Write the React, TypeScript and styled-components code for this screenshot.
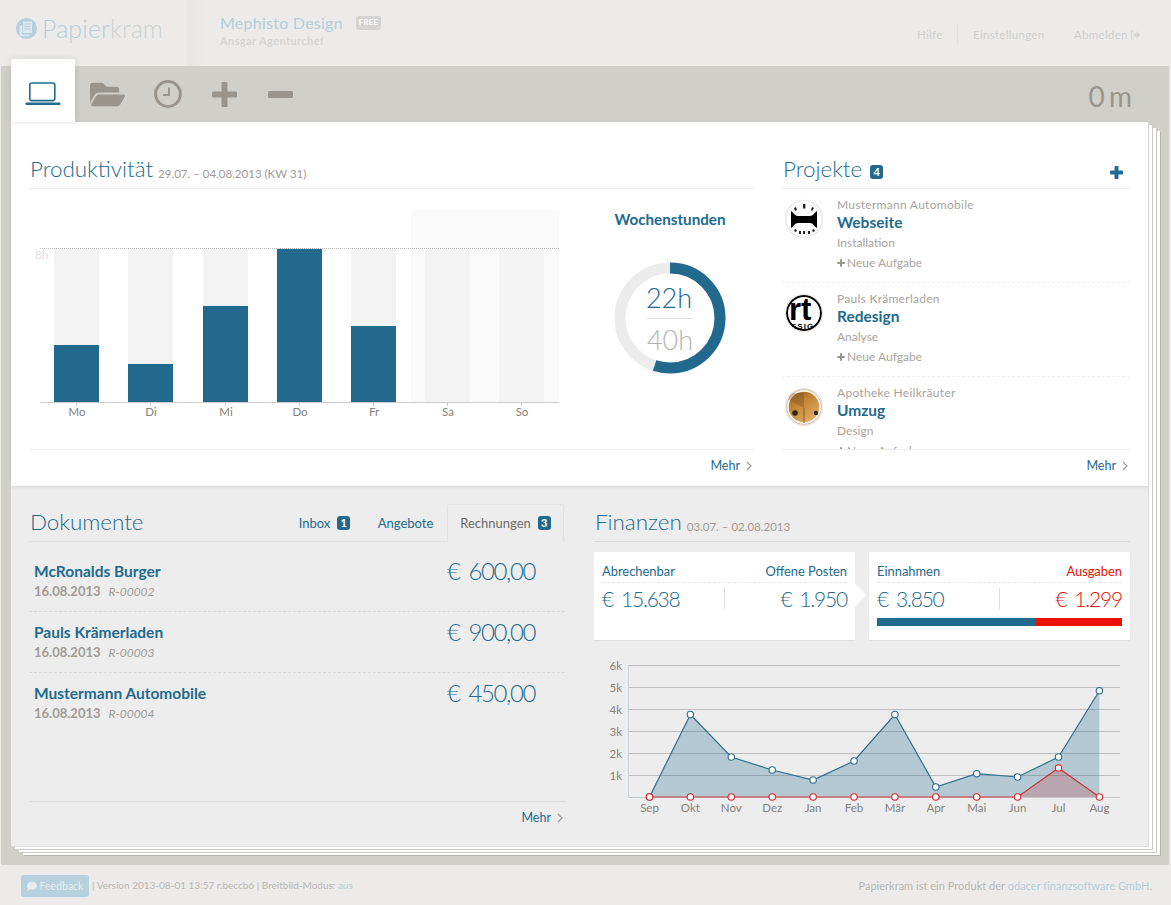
import styled, { createGlobalStyle } from "styled-components";
import { FaFolderOpen, FaComment } from "react-icons/fa";

const BLUE = "#216a8e";

const GlobalStyle = createGlobalStyle`
    html, body {
        margin: 0;
        padding: 0;
        background: #ecebe9;
    }
    body {
        font-family: "Lato", "Open Sans", sans-serif;
        color: #a09b94;
    }
    * { box-sizing: border-box; }
`;

const Page = styled.div`
    width: 1171px;
    height: 905px;
    overflow: hidden;
    display: flex;
    flex-direction: column;
`;

/* ---------- header ---------- */
const Header = styled.header`
    height: 66px;
    display: flex;
    align-items: stretch;
    background: #ecebe9;
`;
const Brand = styled.div`
    width: 187px;
    padding: 0 0 10px 16px;
    display: flex;
    align-items: center;
    gap: 5px;
`;
const BrandName = styled.div`
    font-size: 25px;
    font-weight: 300;
    color: #b5cedb;
    letter-spacing: 0.1px;
    span { color: #cdd2d2; }
`;
const HeaderGrain = styled.div`
    width: 20px;
    background: linear-gradient(90deg, #e8e7e5, #ecebe9);
`;
const Account = styled.div`
    padding: 13px 0 0 13px;
`;
const AccountRow = styled.div`
    display: flex;
    align-items: center;
    gap: 13px;
`;
const AccountName = styled.div`
    font-size: 16px;
    line-height: 20px;
    color: #b5cedb;
    letter-spacing: 0.25px;
`;
const FreeBadge = styled.span`
    background: #d5d4d0;
    color: #fff;
    font-size: 7.5px;
    font-weight: 700;
    letter-spacing: 0.4px;
    padding: 2px 3px;
    border-radius: 3px;
    line-height: 10px;
`;
const AccountUser = styled.div`
    font-size: 11px;
    font-weight: 700;
    line-height: 16px;
    color: #d6d6d4;
    letter-spacing: 0.4px;
`;
const TopNav = styled.nav`
    margin-left: auto;
    padding: 25px 30px 0 0;
    display: flex;
    align-items: flex-start;
    font-size: 11.5px;
    color: #cfcfcd;
    letter-spacing: 0.3px;
`;
const TopNavItem = styled.a<{ $divider?: boolean; $width: number }>`
    width: ${(p) => p.$width}px;
    height: 20px;
    line-height: 18px;
    display: flex;
    align-items: center;
    gap: 2px;
    border-right: ${(p) => (p.$divider ? "1px solid #e3e2e0" : "0")};
`;

/* ---------- band with toolbar + paper stack ---------- */
const Band = styled.main`
    height: 799px;
    margin: 0 2px 0 1px;
    background: #d0cfca;
    display: flex;
    flex-direction: column;
`;
const Toolbar = styled.div`
    height: 56px;
    padding-left: 10px;
    display: flex;
    align-items: flex-start;
`;
const ActiveTab = styled.div`
    width: 64px;
    height: 63px;
    margin-top: -7px;
    background: #fff;
    border-radius: 2px 2px 0 0;
    box-shadow: 0 0 6px rgba(0, 0, 0, 0.12);
    display: flex;
    align-items: center;
    justify-content: center;
    padding-top: 7px;
    position: relative;
    z-index: 2;
`;
const ToolButton = styled.div<{ $width: number }>`
    width: ${(p) => p.$width}px;
    height: 56px;
    display: flex;
    align-items: center;
    justify-content: center;
    color: #9a958c;
`;
const Timer = styled.div`
    margin-left: auto;
    margin-right: 37px;
    font-size: 28px;
    line-height: 60px;
    color: #9a958c;
    word-spacing: -3px;
`;
const Paper = styled.div`
    width: 1137px;
    height: 724px;
    margin-left: 10px;
    background: #ededed;
    box-shadow: 1px 1px 0 #dcdcda, 4px 3px 0 #fff, 5px 4px 0 #c9c9c5, 8px 6px 0 #fff, 9px 7px 0 #c9c9c5,
        12px 9px 0 #fff, 13px 10px 0 #b5b5b0;
    display: flex;
    flex-direction: column;
`;
const TopSheet = styled.section`
    height: 364px;
    padding: 30px 18px 0;
    background: #fff;
    display: grid;
    grid-template-columns: 725px 348px;
    column-gap: 28px;
    box-shadow: 0 1px 3px rgba(0, 0, 0, 0.1);
    position: relative;
`;
const BottomSheet = styled.section`
    flex: 1;
    padding: 19px 18px 13px;
    display: grid;
    grid-template-columns: 536px 536px;
    column-gap: 29px;
`;
const Column = styled.div`
    display: flex;
    flex-direction: column;
    min-width: 0;
`;
const HeadRow = styled.div<{ $line: string }>`
    height: 37px;
    flex: none;
    display: flex;
    align-items: flex-end;
    padding-bottom: 4px;
    border-bottom: 1px solid ${(p) => p.$line};
`;
const Title = styled.h2`
    margin: 0 5px 0 1px;
    font-size: 22.4px;
    line-height: 30px;
    font-weight: 300;
    color: ${BLUE};
`;
const TitleNote = styled.span`
    font-size: 11.5px;
    line-height: 20px;
    color: #a09b94;
`;
const Badge = styled.span`
    display: inline-block;
    min-width: 13px;
    height: 14px;
    border-radius: 3px;
    background: ${BLUE};
    color: #fff;
    font-size: 11px;
    font-weight: 700;
    line-height: 14px;
    text-align: center;
`;
const HeadBadge = styled(Badge)`
    margin: 0 0 5px 3px;
`;
const AddButton = styled.div`
    margin: 0 7px 5px auto;
    display: flex;
`;
const MoreRow = styled.div<{ $line: string; $height: number; $lift?: number }>`
    flex: none;
    height: ${(p) => p.$height}px;
    border-top: 1px solid ${(p) => p.$line};
    display: flex;
    align-items: center;
    justify-content: flex-end;
    gap: 6px;
    padding: 0 2px ${(p) => p.$lift ?? 0}px 0;
    font-size: 12.5px;
    color: ${BLUE};
`;

/* ---------- productivity ---------- */
const ProductivityBody = styled.div`
    height: 260px;
    display: flex;
`;
const HoursBox = styled.div`
    width: 165px;
    padding: 20px 3px 0 0;
    display: flex;
    flex-direction: column;
    align-items: center;
`;
const HoursTitle = styled.div`
    font-size: 15.2px;
    line-height: 20px;
    font-weight: 700;
    color: ${BLUE};
    margin-bottom: 33px;
`;

/* ---------- projects ---------- */
const ProjectList = styled.div`
    height: 260px;
    overflow: hidden;
`;
const ProjectRow = styled.div`
    height: 94px;
    padding: 8px 0 0 4px;
    display: flex;
    gap: 15px;
    border-bottom: 1px dashed #f0f0f0;
`;
const Avatar = styled.div`
    flex: none;
    width: 36px;
    height: 36px;
    margin-top: 4px;
    border-radius: 50%;
    overflow: hidden;
    background: #fff;
    box-shadow: 0 0 2px rgba(0, 0, 0, 0.35);
    svg { display: block; }
`;
const ProjectClient = styled.div`
    font-size: 12px;
    line-height: 15px;
    color: #a8a39c;
    letter-spacing: 0.28px;
`;
const ProjectName = styled.div`
    font-size: 15.5px;
    line-height: 20px;
    font-weight: 700;
    color: ${BLUE};
`;
const ProjectStage = styled.div`
    font-size: 12px;
    line-height: 21px;
    color: #a8a39c;
`;
const NewTask = styled.div`
    font-size: 12px;
    line-height: 20px;
    color: #a8a39c;
    display: flex;
    align-items: center;
    gap: 2px;
`;

/* ---------- documents ---------- */
const Tabs = styled.div`
    margin-left: auto;
    margin-right: 1px;
    align-self: flex-end;
    margin-bottom: -5px;
    display: flex;
    align-items: flex-end;
`;
const DocTab = styled.div<{ $active?: boolean; $width: number }>`
    width: ${(p) => p.$width}px;
    height: 38px;
    display: flex;
    align-items: center;
    justify-content: center;
    gap: 7px;
    font-size: 13px;
    color: ${(p) => (p.$active ? "#6b6b68" : BLUE)};
    border: 1px solid ${(p) => (p.$active ? "#e3e3e3" : "transparent")};
    border-bottom: 1px solid ${(p) => (p.$active ? "#ededed" : "transparent")};
    border-radius: 3px 3px 0 0;
`;
const DocList = styled.div`
    flex: 1;
    padding-top: 9px;
`;
const DocRow = styled.div<{ $last?: boolean }>`
    height: 61px;
    padding: 9px 30px 0 5px;
    display: flex;
    justify-content: space-between;
    border-bottom: ${(p) => (p.$last ? "0" : "1px dashed #d8d8d8")};
`;
const DocName = styled.div`
    font-size: 15.5px;
    line-height: 22px;
    font-weight: 700;
    color: ${BLUE};
`;
const DocMeta = styled.div`
    font-size: 13px;
    line-height: 19px;
    font-weight: 700;
    color: #a09b94;
    em {
        margin-left: 8px;
        font-size: 12px;
        font-weight: 400;
    }
`;
const DocAmount = styled.div`
    font-size: 24px;
    line-height: 22px;
    font-weight: 300;
    letter-spacing: -1.4px;
    word-spacing: 4px;
    color: ${BLUE};
`;

/* ---------- finances ---------- */
const CardRow = styled.div`
    margin-top: 10px;
    display: grid;
    grid-template-columns: 261px 261px;
    column-gap: 14px;
`;
const Card = styled.div<{ $arrow?: boolean }>`
    height: 88px;
    padding: 8px 8px 0;
    background: #fff;
    box-shadow: 0 1px 1px #dfdfdf;
    position: relative;
    ${(p) =>
        p.$arrow &&
        `&::after {
            content: "";
            position: absolute;
            right: -11px;
            top: 31px;
            border-left: 11px solid #fff;
            border-top: 12.5px solid transparent;
            border-bottom: 12.5px solid transparent;
        }`}
`;
const CardLabels = styled.div`
    height: 23px;
    display: flex;
    justify-content: space-between;
    align-items: center;
    border-bottom: 1px dashed #e8e8e8;
    font-size: 12.9px;
    color: ${BLUE};
`;
const RedLabel = styled.span`
    color: #ea1100;
`;
const CardValues = styled.div`
    margin-top: 5px;
    display: grid;
    grid-template-columns: 1fr 1fr;
`;
const CardValue = styled.div<{ $right?: boolean; $red?: boolean }>`
    height: 21px;
    line-height: 21px;
    font-size: 21px;
    font-weight: 300;
    letter-spacing: -1.2px;
    word-spacing: 3.5px;
    white-space: nowrap;
    color: ${(p) => (p.$red ? "#ea1100" : BLUE)};
    text-align: ${(p) => (p.$right ? "right" : "left")};
    border-right: ${(p) => (p.$right ? "0" : "1px solid #dcdcdc")};
`;
const RatioBar = styled.div`
    margin-top: 9px;
    height: 8px;
    display: flex;
`;
const RatioPart = styled.div<{ $size: number; $color: string }>`
    flex: ${(p) => p.$size};
    background: ${(p) => p.$color};
`;
const FinanceChart = styled.div`
    margin-top: 15px;
    flex: none;
    svg { display: block; }
`;

/* ---------- footer ---------- */
const Footer = styled.footer`
    height: 40px;
    padding: 0 19px 0 21px;
    display: flex;
    align-items: center;
    color: #b8b7b3;
    white-space: pre;
`;
const FeedbackButton = styled.div`
    width: 68px;
    height: 22px;
    margin: 2px 3px 0 0;
    background: #b6d0dd;
    border-radius: 3px;
    display: flex;
    align-items: center;
    justify-content: center;
    gap: 3px;
    color: #e6eef1;
    font-size: 10.5px;
`;
const FooterMeta = styled.div`
    font-size: 10px;
    letter-spacing: 0;
`;
const FooterLink = styled.span`
    color: #b5cedb;
`;
const FooterRight = styled.div`
    margin-left: auto;
    font-size: 11px;
    letter-spacing: 0.02px;
`;

/* ---------- drawings ---------- */
const LogoMark = () => (
    <svg width="21" height="21" viewBox="0 0 21 21">
        <circle cx="10.5" cy="10.5" r="10.5" fill="#b5cedb" />
        <path d="M7 3.5h9v11.5h-9z" fill="#dfe8ec" />
        <path d="M8.5 6h6M8.5 8.5h6M8.5 11h6" stroke="#b5cedb" strokeWidth="1.2" />
        <path d="M3.5 7.5h2.5v9h7.5v1.5h-10z" fill="#dfe8ec" />
    </svg>
);

const LaptopIcon = () => (
    <svg width="36" height="24" viewBox="0 0 36 24">
        <rect x="4.8" y="1" width="25" height="17.6" rx="2" fill="none" stroke={BLUE} strokeWidth="1.6" />
        <rect x="0.5" y="20.5" width="35" height="2.6" rx="1" fill={BLUE} />
    </svg>
);

const ClockIcon = () => (
    <svg width="28" height="28" viewBox="0 0 28 28">
        <circle cx="14" cy="14" r="12.4" fill="none" stroke="#9a958c" strokeWidth="3" />
        <path d="M15 7.5v7.5h-6" fill="none" stroke="#9a958c" strokeWidth="2" />
    </svg>
);

const PlusIcon = ({ size, thick, color }: { size: number; thick: number; color: string }) => (
    <svg width={size} height={size} viewBox={`0 0 ${size} ${size}`}>
        <rect x={(size - thick) / 2} y="0" width={thick} height={size} rx="1" fill={color} />
        <rect x="0" y={(size - thick) / 2} width={size} height={thick} rx="1" fill={color} />
    </svg>
);

const MinusIcon = () => (
    <svg width="25" height="7" viewBox="0 0 25 7">
        <rect width="25" height="7" rx="1.5" fill="#9a958c" />
    </svg>
);

const LogoutIcon = () => (
    <svg width="11" height="10" viewBox="0 0 11 10">
        <path d="M4 1H1.5v8H4" fill="none" stroke="#d6d6d4" strokeWidth="1.2" />
        <path d="M3.5 3.5h3V1l4 4-4 4V6.5h-3z" fill="#d6d6d4" />
    </svg>
);

const Chevron = () => (
    <svg width="6" height="10" viewBox="0 0 6 10">
        <path d="M1 1l4 4-4 4" fill="none" stroke="#a09b94" strokeWidth="1.2" />
    </svg>
);

const AvatarMustermann = () => (
    <svg width="36" height="36" viewBox="0 0 36 36">
        <path d="M5 10C8 12 9 15 12 15H24C27 15 28 12 31 10V27C28 25 27 22 24 22H12C9 22 8 25 5 27Z" fill="#000" />
        <path d="M17 3h2.4v4.5h-2.4zM8 7l2-1 1 3-2 1zM26 6l2 1-2 3-1-1zM8 29l2-1 1 2-2 1zM13 30h2v3h-2zM17 30h2v3h-2zM22 30h2v3h-2zM27 28l2 1-1 2-2-1z" fill="#222" />
    </svg>
);

const AvatarPauls = () => (
    <svg width="36" height="36" viewBox="0 0 36 36">
        <circle cx="18" cy="18" r="17" fill="none" stroke="#000" strokeWidth="2" />
        <text x="3" y="25" fontFamily="'Liberation Sans', sans-serif" fontWeight="700" fontSize="31" fill="#000">
            rt
        </text>
        <text x="5" y="34" fontFamily="'Liberation Sans', sans-serif" fontWeight="700" fontSize="8" letterSpacing="1" fill="#000">
            ESIG
        </text>
    </svg>
);

const AvatarApotheke = () => (
    <svg width="36" height="36" viewBox="0 0 36 36">
        <defs>
            <linearGradient id="box" x1="0" y1="0" x2="0.6" y2="1">
                <stop offset="0" stopColor="#9a601c" />
                <stop offset="0.55" stopColor="#c98b3d" />
                <stop offset="1" stopColor="#dcab62" />
            </linearGradient>
        </defs>
        <circle cx="18" cy="18" r="17.3" fill="none" stroke="#c9a27a" strokeWidth="0.8" />
        <circle cx="18" cy="18" r="15.3" fill="url(#box)" />
        <path d="M18 19L3 11V4h15z" fill="#7d5019" opacity="0.35" />
        <path d="M18 19v15" stroke="#8b5a1e" strokeWidth="1" />
        <circle cx="9" cy="24" r="2.8" fill="#33240f" />
        <circle cx="30" cy="24" r="2.2" fill="#33240f" />
    </svg>
);

const WEEK = [
    { day: "Mo", x: 25, top: 156 },
    { day: "Di", x: 99, top: 175 },
    { day: "Mi", x: 174, top: 117 },
    { day: "Do", x: 248, top: 60 },
    { day: "Fr", x: 322, top: 137 },
    { day: "Sa", x: 396, top: 213 },
    { day: "So", x: 470, top: 213 },
];

const WeekChart = () => (
    <svg width="560" height="260" viewBox="0 0 560 260">
        <rect x="382" y="21" width="148" height="192" fill="#fafafa" />
        {WEEK.map((d) => (
            <g key={d.day}>
                <rect x={d.x} y="59" width="45" height="154" fill="#f3f3f3" />
                <rect x={d.x} y={d.top} width="45" height={213 - d.top} fill={BLUE} />
                <line x1={d.x + 22.5} x2={d.x + 22.5} y1="213" y2="217" stroke="#ccc" />
                <text x={d.x + 23} y="227" textAnchor="middle" fontSize="11.5" fill="#85817b">
                    {d.day}
                </text>
            </g>
        ))}
        <line x1="11" x2="530" y1="59.5" y2="59.5" stroke="#bbb" strokeDasharray="1 1" />
        <line x1="11" x2="530" y1="213.5" y2="213.5" stroke="#ccc" />
        <text x="6" y="70" fontSize="11.5" fill="#ddd">
            8h
        </text>
    </svg>
);

const HoursDonut = () => (
    <svg width="112" height="112" viewBox="0 0 112 112">
        <circle cx="56" cy="56" r="50" fill="none" stroke="#ececec" strokeWidth="11" />
        <circle
            cx="56"
            cy="56"
            r="50"
            fill="none"
            stroke={BLUE}
            strokeWidth="11"
            pathLength={100}
            strokeDasharray="55 45"
            transform="rotate(-90 56 56)"
        />
        <text x="55" y="46" textAnchor="middle" fontSize="27" fontWeight="300" fill={BLUE}>
            22h
        </text>
        <line x1="33" x2="79" y1="56.5" y2="56.5" stroke="#ddd" />
        <text x="56" y="88" textAnchor="middle" fontSize="27" fontWeight="300" fill="#b8b4ad">
            40h
        </text>
    </svg>
);

const MONTHS = ["Sep", "Okt", "Nov", "Dez", "Jan", "Feb", "Mär", "Apr", "Mai", "Jun", "Jul", "Aug"];
const INCOME = [142, 59.5, 102, 115, 125, 106, 59.5, 132, 118.7, 122, 102, 35.7];
const SPENDING = [142, 142, 142, 142, 142, 142, 142, 142, 142, 142, 113, 142];
const monthX = (i: number) => 55.5 + i * 40.9;
const toLine = (values: number[]) => values.map((y, i) => `${monthX(i)},${y}`).join(" ");
const toArea = (values: number[]) => `${monthX(0)},142 ${toLine(values)} ${monthX(11)},142`;

const MoneyChart = () => (
    <svg width="536" height="175" viewBox="0 0 536 175">
        {[10, 32, 54, 76, 98, 120].map((y, i) => (
            <g key={y}>
                <line x1="34.5" x2="526" y1={y + 0.5} y2={y + 0.5} stroke="#bdbdbd" />
                <text x="28" y={y + 5} textAnchor="end" fontSize="11.5" fill="#85817b">
                    {6 - i}k
                </text>
            </g>
        ))}
        <line x1="34.5" x2="34.5" y1="10" y2="142" stroke="#c5d3da" />
        <line x1="34.5" x2="526" y1="142.5" y2="142.5" stroke="#c8c8c8" />
        <polygon points={toArea(INCOME)} fill={BLUE} fillOpacity="0.28" />
        <polygon points={toArea(SPENDING)} fill="#c8232c" fillOpacity="0.22" />
        <polyline points={toLine(INCOME)} fill="none" stroke="#2f6f8d" strokeWidth="1.2" />
        <polyline points={toLine(SPENDING)} fill="none" stroke="#c9343a" strokeWidth="1.2" />
        {INCOME.map((y, i) => (
            <circle key={i} cx={monthX(i)} cy={y} r="3.2" fill="#fff" stroke="#2f6f8d" strokeWidth="1.1" />
        ))}
        {SPENDING.map((y, i) => (
            <circle key={i} cx={monthX(i)} cy={y} r="3.2" fill="#fff" stroke="#d9262b" strokeWidth="1.1" />
        ))}
        {MONTHS.map((m, i) => (
            <text key={m} x={monthX(i)} y="157" textAnchor="middle" fontSize="11.5" fill="#85817b">
                {m}
            </text>
        ))}
    </svg>
);

const PROJECTS = [
    { client: "Mustermann Automobile", name: "Webseite", stage: "Installation", logo: <AvatarMustermann /> },
    { client: "Pauls Krämerladen", name: "Redesign", stage: "Analyse", logo: <AvatarPauls /> },
    { client: "Apotheke Heilkräuter", name: "Umzug", stage: "Design", logo: <AvatarApotheke /> },
];

const DOCUMENTS = [
    { name: "McRonalds Burger", number: "R-00002", amount: "€ 600,00" },
    { name: "Pauls Krämerladen", number: "R-00003", amount: "€ 900,00" },
    { name: "Mustermann Automobile", number: "R-00004", amount: "€ 450,00" },
];

export default function App() {
    return (
        <Page>
            <GlobalStyle />
            <Header>
                <Brand>
                    <LogoMark />
                    <BrandName>
                        Papier<span>kram</span>
                    </BrandName>
                </Brand>
                <HeaderGrain />
                <Account>
                    <AccountRow>
                        <AccountName>Mephisto Design</AccountName>
                        <FreeBadge>FREE</FreeBadge>
                    </AccountRow>
                    <AccountUser>Ansgar Agenturchef</AccountUser>
                </Account>
                <TopNav>
                    <TopNavItem $width={41} $divider>Hilfe</TopNavItem>
                    <TopNavItem $width={15} />
                    <TopNavItem $width={101}>Einstellungen</TopNavItem>
                    <TopNavItem $width={67}>
                        Abmelden
                        <LogoutIcon />
                    </TopNavItem>
                </TopNav>
            </Header>

            <Band>
                <Toolbar>
                    <ActiveTab>
                        <LaptopIcon />
                    </ActiveTab>
                    <ToolButton $width={64}>
                        <FaFolderOpen size={35} />
                    </ToolButton>
                    <ToolButton $width={57}>
                        <ClockIcon />
                    </ToolButton>
                    <ToolButton $width={56}>
                        <PlusIcon size={25} thick={6} color="#9a958c" />
                    </ToolButton>
                    <ToolButton $width={56}>
                        <MinusIcon />
                    </ToolButton>
                    <Timer>0 m</Timer>
                </Toolbar>

                <Paper>
                    <TopSheet>
                        <Column>
                            <HeadRow $line="#ececec">
                                <Title>Produktivität</Title>
                                <TitleNote>29.07. – 04.08.2013 (KW 31)</TitleNote>
                            </HeadRow>
                            <ProductivityBody>
                                <WeekChart />
                                <HoursBox>
                                    <HoursTitle>Wochenstunden</HoursTitle>
                                    <HoursDonut />
                                </HoursBox>
                            </ProductivityBody>
                            <MoreRow $line="#ececec" $height={36} $lift={4}>
                                Mehr <Chevron />
                            </MoreRow>
                        </Column>
                        <Column>
                            <HeadRow $line="#ececec">
                                <Title>Projekte</Title>
                                <HeadBadge>4</HeadBadge>
                                <AddButton>
                                    <PlusIcon size={13} thick={4} color={BLUE} />
                                </AddButton>
                            </HeadRow>
                            <ProjectList>
                                {PROJECTS.map((p) => (
                                    <ProjectRow key={p.name}>
                                        <Avatar>{p.logo}</Avatar>
                                        <div>
                                            <ProjectClient>{p.client}</ProjectClient>
                                            <ProjectName>{p.name}</ProjectName>
                                            <ProjectStage>{p.stage}</ProjectStage>
                                            <NewTask>
                                                <PlusIcon size={8} thick={2} color="#9a958c" />
                                                Neue Aufgabe
                                            </NewTask>
                                        </div>
                                    </ProjectRow>
                                ))}
                            </ProjectList>
                            <MoreRow $line="#ececec" $height={36} $lift={4}>
                                Mehr <Chevron />
                            </MoreRow>
                        </Column>
                    </TopSheet>

                    <BottomSheet>
                        <Column>
                            <HeadRow $line="#e2e2e2">
                                <Title>Dokumente</Title>
                                <Tabs>
                                    <DocTab $width={79}>
                                        Inbox <Badge>1</Badge>
                                    </DocTab>
                                    <DocTab $width={83}>Angebote</DocTab>
                                    <DocTab $width={117} $active>
                                        Rechnungen <Badge>3</Badge>
                                    </DocTab>
                                </Tabs>
                            </HeadRow>
                            <DocList>
                                {DOCUMENTS.map((d, i) => (
                                    <DocRow key={d.number} $last={i === DOCUMENTS.length - 1}>
                                        <div>
                                            <DocName>{d.name}</DocName>
                                            <DocMeta>
                                                16.08.2013<em>{d.number}</em>
                                            </DocMeta>
                                        </div>
                                        <DocAmount>{d.amount}</DocAmount>
                                    </DocRow>
                                ))}
                            </DocList>
                            <MoreRow $line="#dcdcdc" $height={32}>
                                Mehr <Chevron />
                            </MoreRow>
                        </Column>
                        <Column>
                            <HeadRow $line="#dcdcdc">
                                <Title>Finanzen</Title>
                                <TitleNote>03.07. – 02.08.2013</TitleNote>
                            </HeadRow>
                            <CardRow>
                                <Card $arrow>
                                    <CardLabels>
                                        <span>Abrechenbar</span>
                                        <span>Offene Posten</span>
                                    </CardLabels>
                                    <CardValues>
                                        <CardValue>€ 15.638</CardValue>
                                        <CardValue $right>€ 1.950</CardValue>
                                    </CardValues>
                                </Card>
                                <Card>
                                    <CardLabels>
                                        <span>Einnahmen</span>
                                        <RedLabel>Ausgaben</RedLabel>
                                    </CardLabels>
                                    <CardValues>
                                        <CardValue>€ 3.850</CardValue>
                                        <CardValue $right $red>€ 1.299</CardValue>
                                    </CardValues>
                                    <RatioBar>
                                        <RatioPart $size={159} $color={BLUE} />
                                        <RatioPart $size={86} $color="#ea1100" />
                                    </RatioBar>
                                </Card>
                            </CardRow>
                            <FinanceChart>
                                <MoneyChart />
                            </FinanceChart>
                        </Column>
                    </BottomSheet>
                </Paper>
            </Band>

            <Footer>
                <FeedbackButton>
                    <FaComment size={10} />
                    Feedback
                </FeedbackButton>
                <FooterMeta>
                    {"| Version 2013-08-01 13:57 r.beccb6 | Breitbild-Modus: "}
                    <FooterLink>aus</FooterLink>
                </FooterMeta>
                <FooterRight>
                    {"Papierkram ist ein Produkt der "}
                    <FooterLink>odacer finanzsoftware GmbH</FooterLink>.
                </FooterRight>
            </Footer>
        </Page>
    );
}
